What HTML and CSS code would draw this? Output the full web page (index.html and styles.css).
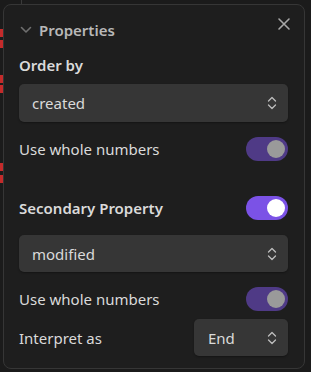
FILE: index.html
```html
<!DOCTYPE html>
<html lang="en">
<head>
    <meta charset="UTF-8">
    <meta name="viewport" content="width=device-width, initial-scale=1.0">
    <title>Properties</title>
    <link rel="stylesheet" href="styles.css">
</head>
<body>
    <!-- canvas behind the panel -->
    <div class="grid-line"></div>
    <div class="marker m1"></div>
    <div class="marker m2"></div>
    <div class="marker m3"></div>
    <div class="marker m4"></div>
    <div class="marker m5"></div>
    <div class="marker m6"></div>

    <div class="panel">
        <div class="panel-header">
            <svg class="collapse" width="12" height="8" viewBox="0 0 12 8">
                <path d="M1.5 1.5 L6 6 L10.5 1.5" fill="none" stroke="#6f6f6f" stroke-width="1.6" stroke-linecap="round" stroke-linejoin="round"/>
            </svg>
            <span class="panel-title">Properties</span>
            <svg class="close" width="14" height="14" viewBox="0 0 14 14">
                <path d="M2 2 L12 12 M12 2 L2 12" fill="none" stroke="#a8a8a8" stroke-width="1.6" stroke-linecap="round"/>
            </svg>
        </div>

        <div class="label">Order by</div>
        <div class="select wide">
            <span>created</span>
            <svg class="arrows" width="10" height="14" viewBox="0 0 10 14">
                <path d="M1.5 5 L5 1.5 L8.5 5 M1.5 9 L5 12.5 L8.5 9" fill="none" stroke="#bdbdbd" stroke-width="1.3" stroke-linecap="round" stroke-linejoin="round"/>
            </svg>
        </div>
        <div class="row first-toggle">
            <span class="text">Use whole numbers</span>
            <div class="toggle dim"><div class="knob"></div></div>
        </div>

        <div class="row secondary">
            <span class="label">Secondary Property</span>
            <div class="toggle on"><div class="knob"></div></div>
        </div>
        <div class="select wide second">
            <span>modified</span>
            <svg class="arrows" width="10" height="14" viewBox="0 0 10 14">
                <path d="M1.5 5 L5 1.5 L8.5 5 M1.5 9 L5 12.5 L8.5 9" fill="none" stroke="#bdbdbd" stroke-width="1.3" stroke-linecap="round" stroke-linejoin="round"/>
            </svg>
        </div>
        <div class="row first-toggle">
            <span class="text">Use whole numbers</span>
            <div class="toggle dim"><div class="knob"></div></div>
        </div>
        <div class="row interpret">
            <span class="text">Interpret as</span>
            <div class="select small">
                <span>End</span>
                <svg class="arrows" width="10" height="14" viewBox="0 0 10 14">
                    <path d="M1.5 5 L5 1.5 L8.5 5 M1.5 9 L5 12.5 L8.5 9" fill="none" stroke="#bdbdbd" stroke-width="1.3" stroke-linecap="round" stroke-linejoin="round"/>
                </svg>
            </div>
        </div>
    </div>
</body>
</html>
```
FILE: styles.css
```css
/* General */
body {
    margin: 0;
    background-color: #1b1b1b;
    font-family: "Noto Sans", "Open Sans", sans-serif;
    color: #dadada;
    position: relative;
    height: 372px;
    overflow: hidden;
}

/* Canvas bits behind the panel */
.grid-line {
    position: absolute;
    left: 21px;
    top: 0;
    width: 1px;
    height: 5px;
    background-color: #3a3a3a;
}

.marker {
    position: absolute;
    left: 0;
    width: 3px;
    height: 8px;
    background-color: #c42b2b;
}

.m1 { top: 29px; }
.m2 { top: 40px; }
.m3 { top: 75px; }
.m4 { top: 85px; }
.m5 { top: 163px; }
.m6 { top: 175px; }

/* Panel */
.panel {
    position: relative;
    margin: 4px 0 0 3px;
    width: 269px;
    height: 363px;
    padding: 0 16px 0 15px;
    background-color: #1e1e1e;
    border: 1px solid #363636;
    border-radius: 8px;
}

.panel-header {
    display: flex;
    align-items: center;
    height: 50px;
}

.collapse {
    margin: 0 7px 0 1px;
}

.panel-title {
    font-size: 15px;
    font-weight: 600;
    color: #b8b8b8;
}

.close {
    margin-left: auto;
    margin-right: -3px;
    margin-top: -12px;
}

.label {
    font-size: 15px;
    font-weight: 600;
    color: #dadada;
    line-height: 21px;
}

/* Selects */
.select {
    display: flex;
    align-items: center;
    justify-content: space-between;
    box-sizing: border-box;
    background-color: #363636;
    border-radius: 5px;
    box-shadow: 0 1px 2px rgba(0, 0, 0, 0.35);
    font-size: 15px;
    color: #dadada;
}

.select.wide {
    margin-top: 8px;
    height: 38px;
    padding: 0 11px 0 13px;
}

.select.second {
    margin-top: 15px;
    height: 37px;
}

.select.small {
    width: 94px;
    height: 37px;
    padding: 0 11px 0 14px;
}

/* Rows */
.row {
    display: flex;
    align-items: center;
    justify-content: space-between;
    font-size: 15px;
}

.first-toggle {
    margin-top: 15px;
    height: 24px;
}

.secondary {
    margin-top: 35px;
    height: 24px;
}

.interpret {
    margin-top: 8px;
}

.text {
    color: #dadada;
}

/* Toggles */
.toggle {
    box-sizing: border-box;
    width: 42px;
    height: 24px;
    border-radius: 12px;
    padding: 3px;
    display: flex;
    justify-content: flex-end;
}

.toggle.dim {
    background-color: #4f3a86;
}

.toggle.on {
    background-color: #7b52e6;
}

.knob {
    width: 18px;
    height: 18px;
    border-radius: 50%;
    background-color: #9a9a9a;
}

.toggle.on .knob {
    background-color: #ffffff;
}
```
